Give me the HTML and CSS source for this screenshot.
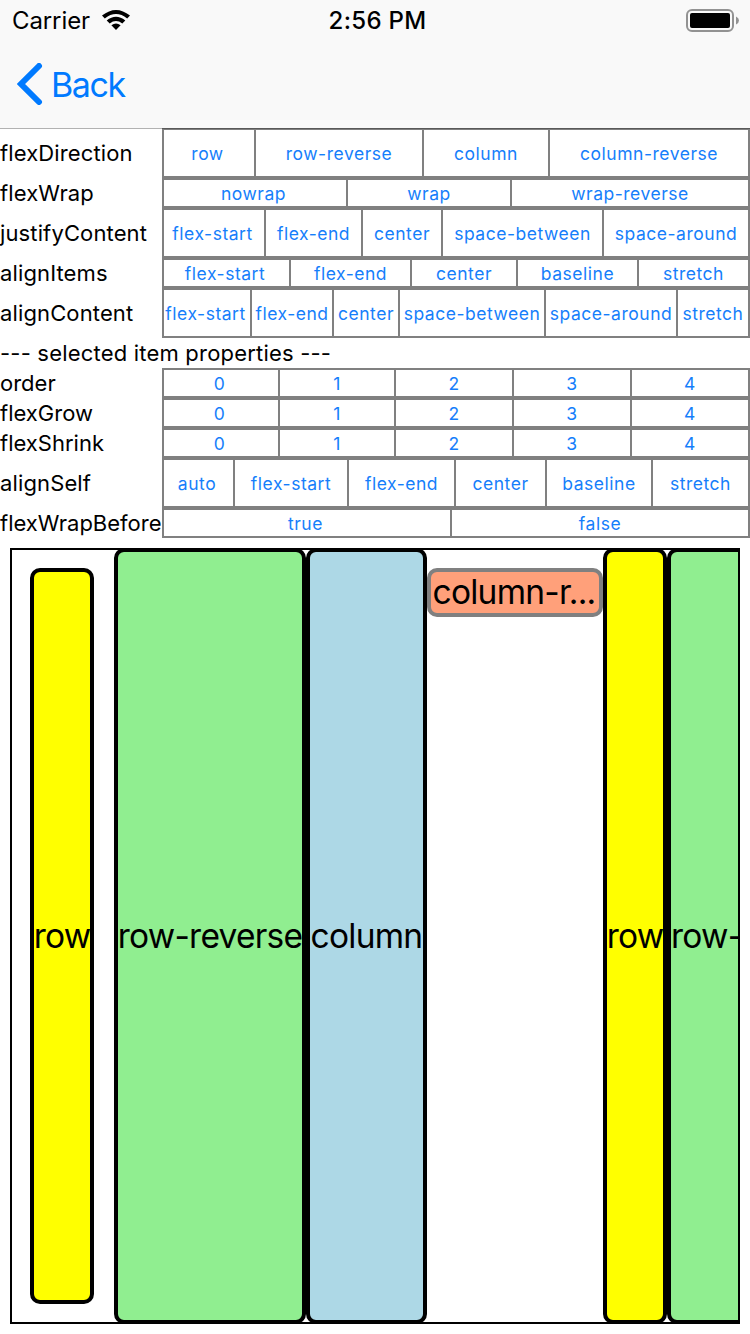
FILE: index.html
```html
<!DOCTYPE html>
<html lang="en">
<head>
<meta charset="utf-8">
<title>Flex layout</title>
<link rel="stylesheet" href="styles.css">
</head>
<body>
<header class="header">
  <div class="status">
    <div class="carrier"><span>Carrier</span>
      <svg class="wifi" width="28" height="20" viewBox="0 0 28 20"><path d="M0 5.600Q14-5.600 28 5.600L25.200 8.500Q14-.3 2.800 8.500Z"/><path d="M4.700 10.500Q14 3 23.300 10.500L20.300 13.500Q14 8.700 7.700 13.500Z"/><path d="M9.400 15.300Q14 11.500 18.600 15.300L14 20Z"/></svg>
    </div>
    <div class="time">2:56 PM</div>
    <svg class="battery" width="54" height="24" viewBox="0 0 54 24"><rect x="1" y="1" width="46" height="21" rx="5" fill="none" stroke="#929292" stroke-width="2"/><rect x="4" y="4" width="40" height="15" rx="2"/><path d="M50 7.500Q53 9 53 11.500T50 15.500Z" fill="#929292"/></svg>
  </div>
  <div class="nav">
    <svg class="chevron" width="26" height="42" viewBox="0 0 26 42"><path d="M22 3L4 21L22 39"/></svg>
    <span>Back</span>
  </div>
</header>
<main class="panel">
  <div class="prop tall"><span class="label">flexDirection</span><div class="choices direction"><a>row</a><a>row-reverse</a><a>column</a><a>column-reverse</a></div></div>
  <div class="prop"><span class="label">flexWrap</span><div class="choices wrap"><a>nowrap</a><a>wrap</a><a>wrap-reverse</a></div></div>
  <div class="prop tall"><span class="label">justifyContent</span><div class="choices justify"><a>flex-start</a><a>flex-end</a><a>center</a><a>space-between</a><a>space-around</a></div></div>
  <div class="prop"><span class="label">alignItems</span><div class="choices items"><a>flex-start</a><a>flex-end</a><a>center</a><a>baseline</a><a>stretch</a></div></div>
  <div class="prop tall"><span class="label">alignContent</span><div class="choices content"><a>flex-start</a><a>flex-end</a><a>center</a><a>space-between</a><a>space-around</a><a>stretch</a></div></div>
  <div class="prop"><span class="label heading">--- selected item properties ---</span></div>
  <div class="prop"><span class="label plain">order</span><div class="choices number"><a>0</a><a>1</a><a>2</a><a>3</a><a>4</a></div></div>
  <div class="prop"><span class="label plain">flexGrow</span><div class="choices number"><a>0</a><a>1</a><a>2</a><a>3</a><a>4</a></div></div>
  <div class="prop"><span class="label plain">flexShrink</span><div class="choices number"><a>0</a><a>1</a><a>2</a><a>3</a><a>4</a></div></div>
  <div class="prop tall"><span class="label">alignSelf</span><div class="choices self"><a>auto</a><a>flex-start</a><a>flex-end</a><a>center</a><a>baseline</a><a>stretch</a></div></div>
  <div class="prop"><span class="label plain">flexWrapBefore</span><div class="choices before"><a>true</a><a>false</a></div></div>
</main>
<section class="stage">
  <div class="item yellow inset"><span>row</span></div>
  <div class="item green"><span>row-reverse</span></div>
  <div class="item blue"><span>column</span></div>
  <div class="item salmon"><span>column-r...</span></div>
  <div class="item yellow"><span>row</span></div>
  <div class="item green clipped"><span>row-</span></div>
</section>
</body>
</html>
```
FILE: styles.css
```css
* { box-sizing: border-box; }
body {
  margin: 0;
  width: 750px;
  height: 1334px;
  overflow: hidden;
  background: #fff;
  color: #000;
  font-family: Inter, "Liberation Sans", sans-serif;
  white-space: nowrap;
}
svg { display: block; flex: none; }
.header {
  position: relative;
  z-index: 1;
  height: 128px;
  background: #f9f9f9;
  box-shadow: 0 1px 0 rgba(0, 0, 0, .3);
}
.status {
  display: grid;
  grid-template-columns: 1fr auto 1fr;
  align-items: center;
  height: 41px;
  padding: 0 10px 0 12px;
  font-size: 24px;
}
.carrier { display: flex; align-items: center; gap: 12px; letter-spacing: -.1px; }
.wifi { margin-bottom: 1px; }
.time { font-weight: 500; letter-spacing: .3px; padding-left: 3px; }
.battery { justify-self: end; }
.nav {
  display: flex;
  align-items: center;
  gap: 8px;
  height: 86px;
  padding-left: 17px;
  color: #007aff;
  font-size: 34px;
  letter-spacing: -1.400px;
}
.chevron path { fill: none; stroke: #007aff; stroke-width: 6; stroke-linecap: round; }
.prop { display: flex; height: 30px; }
.tall { height: 50px; }
.label { width: 162px; display: flex; align-items: center; font-size: 22px; letter-spacing: .13px; flex: none; }
.label.heading { letter-spacing: .2px; }
.label.plain { letter-spacing: 0; }
.choices {
  flex: 1;
  display: grid;
  border: 2px solid gray;
  border-right: 0;
}
.choices a {
  display: flex;
  align-items: center;
  justify-content: center;
  border-right: 2px solid gray;
  color: #157efb;
  font-size: 17.500px;
  letter-spacing: .52px;
}
.choices a:first-child { padding-right: 3px; }
.direction { grid-template-columns: 92px 168px 126px 200px; }
.wrap { grid-template-columns: 184px 164px 238px; }
.justify { grid-template-columns: 102px 97px 80px 161px 146px; }
.items { grid-template-columns: 127px 121px 106px 121px 111px; }
.content { grid-template-columns: 88px 82px 66px 146px 132px 72px; }
.number { grid-template-columns: 116px 116px 118px 118px 118px; }
.self { grid-template-columns: 71px 114px 107px 91px 106px 97px; }
.before { grid-template-columns: 288px 298px; }
.stage {
  position: relative;
  display: flex;
  width: 730px;
  height: 776px;
  margin: 10px 0 0 10px;
  overflow: hidden;
}
.stage::after { content: ""; position: absolute; inset: 0; border: 2px solid #000; }
.item {
  display: flex;
  align-items: center;
  justify-content: center;
  flex: none;
  border: 4px solid #000;
  border-radius: 10px;
  font-size: 33.500px;
  line-height: 40px;
  letter-spacing: -.75px;
}
.item span { margin-bottom: 1px; }
.yellow { width: 64px; background: #ff0; }
.inset { margin: 20px; }
.green { width: 192px; background: #90ee90; }
.clipped { justify-content: flex-start; }
.blue { width: 121px; background: #add8e6; }
.salmon { width: 176px; height: 49px; margin-top: 20px; padding-right: 2px; background: #ffa07a; border-color: gray; }
```
